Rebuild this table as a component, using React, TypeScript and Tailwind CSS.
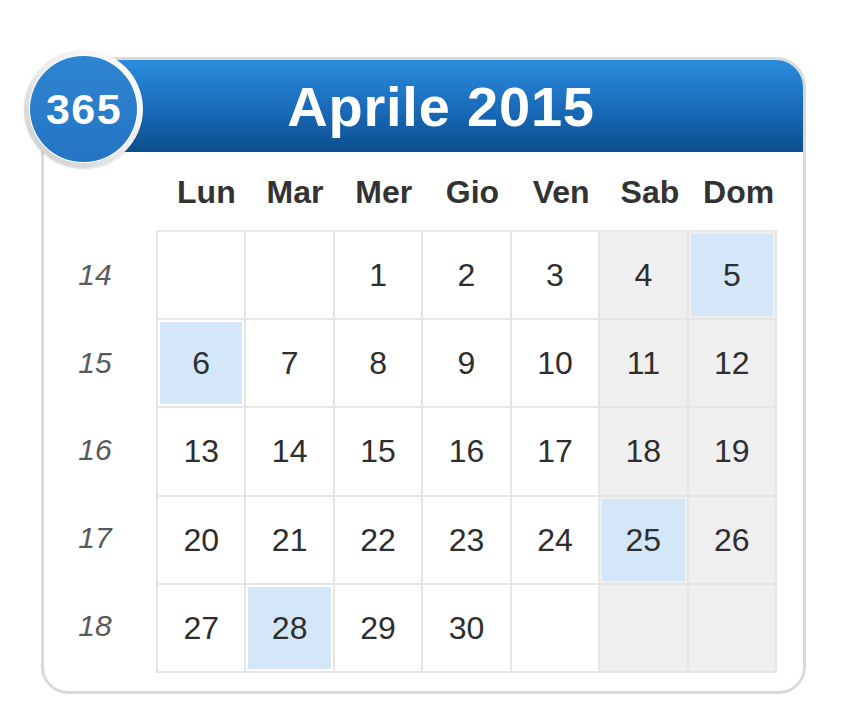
import React from 'react';

const days = ['Lun', 'Mar', 'Mer', 'Gio', 'Ven', 'Sab', 'Dom'];

type Day = { n?: number; hl?: boolean };

const weeks: { wk: number; cells: Day[] }[] = [
  { wk: 14, cells: [{}, {}, { n: 1 }, { n: 2 }, { n: 3 }, { n: 4 }, { n: 5, hl: true }] },
  { wk: 15, cells: [{ n: 6, hl: true }, { n: 7 }, { n: 8 }, { n: 9 }, { n: 10 }, { n: 11 }, { n: 12 }] },
  { wk: 16, cells: [{ n: 13 }, { n: 14 }, { n: 15 }, { n: 16 }, { n: 17 }, { n: 18 }, { n: 19 }] },
  { wk: 17, cells: [{ n: 20 }, { n: 21 }, { n: 22 }, { n: 23 }, { n: 24 }, { n: 25, hl: true }, { n: 26 }] },
  { wk: 18, cells: [{ n: 27 }, { n: 28, hl: true }, { n: 29 }, { n: 30 }, {}, {}, {}] },
];

export default function App() {
  return (
    <div className="w-[849px] h-[721px] bg-white pt-[57px] pl-[41px] font-['Liberation_Sans',Arial,sans-serif]">
      <div className="relative w-[765px] border-[3px] border-[#dadada] rounded-tl-[20px] rounded-tr-[30px] rounded-b-[27px] bg-white">
        {/* header */}
        <div className="h-[92px] rounded-tl-[17px] rounded-tr-[27px] bg-gradient-to-b from-[#2b8cdb] via-[#1a6cbc] to-[#0a4f8e] flex items-center justify-center pl-[35px]">
          <span className="text-white font-bold text-[56px] leading-none tracking-[0.8px] pt-[2px]">Aprile 2015</span>
        </div>

        {/* 365 badge */}
        <div className="absolute left-[-20px] top-[-10px] w-[119px] h-[118px] rounded-full p-[5px] bg-gradient-to-tr from-[#c9c9c9] via-[#ececec] to-white shadow-[0_1px_2px_rgba(0,0,0,0.15)]">
          <div className="w-full h-full rounded-full bg-white p-[1px]">
            <div className="w-full h-full rounded-full bg-gradient-to-b from-[#2f85d3] to-[#2475c3] flex items-center justify-center">
              <span className="text-white font-bold text-[43px] leading-none tracking-[1.5px] pl-[1px]">365</span>
            </div>
          </div>
        </div>

        {/* body */}
        <div className="pr-[26px] pb-[18px]">
          <div className="flex h-[78px] items-center">
            <div className="w-[112px]" />
            <div className="flex-1 grid grid-cols-7 pt-[2px] ml-[6px] mr-[-6px]">
              {days.map((d) => (
                <div key={d} className="text-center text-[32px] font-bold text-[#333333] leading-none">
                  {d}
                </div>
              ))}
            </div>
          </div>

          <div className="flex">
            <div className="w-[112px] grid grid-rows-5 pt-[2px] pb-[2px]">
              {weeks.map((w) => (
                <div key={w.wk} className="flex items-center justify-center pr-[10px] pb-[2px] text-[30px] italic text-[#5a5a5a] leading-none">
                  {w.wk}
                </div>
              ))}
            </div>
            <div className="flex-1 h-[443px] bg-[#e5e5e5] p-[2px] grid grid-cols-7 grid-rows-5 gap-[2px]">
              {weeks.map((w) =>
                w.cells.map((c, i) => (
                  <div
                    key={`${w.wk}-${i}`}
                    className={`${i >= 5 ? 'bg-[#efefef]' : 'bg-white'} p-[2px]`}
                  >
                    <div
                      className={`w-full h-full flex items-center justify-center text-[32px] text-[#2e2e2e] leading-none ${
                        c.hl ? 'bg-[#d4e7f9]' : ''
                      }`}
                    >
                      {c.n ?? ''}
                    </div>
                  </div>
                ))
              )}
            </div>
          </div>
        </div>
      </div>
    </div>
  );
}
